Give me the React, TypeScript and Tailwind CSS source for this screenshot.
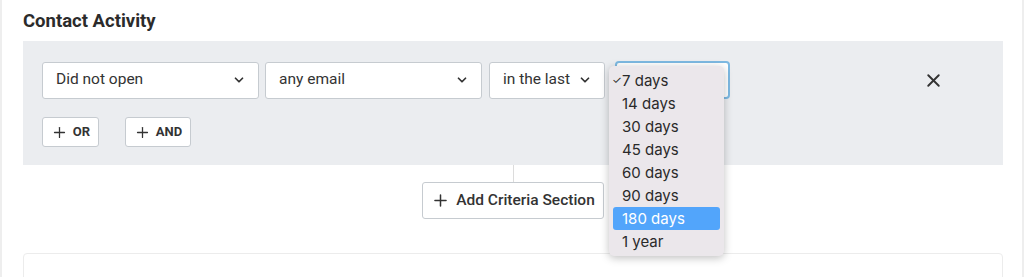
import { ChevronDown, Plus, X } from "lucide-react";

const periods = ["7 days", "14 days", "30 days", "45 days", "60 days", "90 days", "180 days", "1 year"];

function SelectBox({ label, width }: { label: string; width: string }) {
  return (
    <div
      className={`${width} flex h-[37px] items-center justify-between rounded-[3px] border border-[#c6cbd0] bg-white pl-[13px] pr-[12px] text-[15.5px] text-[#333]`}
    >
      <span>{label}</span>
      <ChevronDown size={14} strokeWidth={3} className="text-[#333]" />
    </div>
  );
}

function SmallButton({ label, width }: { label: string; width: string }) {
  return (
    <button
      type="button"
      className={`${width} flex h-[30px] items-center justify-center gap-[5px] rounded-[3px] border border-[#c6cbd0] bg-white text-[13px] font-bold text-[#333]`}
    >
      <Plus size={17} strokeWidth={1.8} />
      {label}
    </button>
  );
}

export default function App() {
  return (
    <div
      className="h-[277px] w-[1024px] overflow-hidden border-x-2 border-[#eeeeee] bg-white pl-[21px] pr-[19px] pt-[9px]"
      style={{ fontFamily: "Roboto, 'Noto Sans', sans-serif" }}
    >
      <h2 className="text-[18.5px] font-bold leading-[24px] text-[#2b2b2b]">Contact Activity</h2>

      <div className="mt-[8px] w-[980px] bg-[#ebedf0] pb-[18px] pl-[19px] pt-[20px]">
        <div className="flex items-center">
          <SelectBox label="Did not open" width="w-[217px]" />
          <div className="ml-[6px]">
            <SelectBox label="any email" width="w-[217px]" />
          </div>
          <div className="ml-[7px]">
            <SelectBox label="in the last" width="w-[116px]" />
          </div>
          <div className="relative ml-[10px]">
            <div className="h-[38px] w-[115px] rounded-[4px] border-2 border-[#7db9e2] bg-white" />
            <ul
              className="absolute left-[-6px] top-[5px] z-10 w-[115px] rounded-[5px] bg-[#ebe7eb] px-[4px] py-[3px] text-[15px] leading-[23px] text-[#2a2a2a] shadow-[0_2px_8px_rgba(0,0,0,0.25)]"
              style={{ fontFamily: "Inter, 'Noto Sans', sans-serif" }}
            >
              {periods.map((p, i) => (
                <li
                  key={p}
                  className={`relative rounded-[3px] pl-[9px] ${i === 6 ? "bg-[#52a5fb] text-white" : ""}`}
                >
                  {i === 0 && <span className="absolute left-[-1px] top-0 text-[11px]">✓</span>}
                  {p}
                </li>
              ))}
            </ul>
          </div>
          <div className="flex-1" />
          <button type="button" className="mr-[59px] text-[#333]">
            <X size={21} strokeWidth={2.2} />
          </button>
        </div>

        <div className="mt-[18px] flex gap-[26px]">
          <SmallButton label="OR" width="w-[57px]" />
          <SmallButton label="AND" width="w-[66px]" />
        </div>
      </div>

      <div className="flex w-[980px] flex-col items-center">
        <div className="h-[17px] w-px bg-[#dcdcdc]" />
        <button
          type="button"
          className="flex h-[37px] w-[182px] items-center justify-center gap-[6px] rounded-[3px] border border-[#c6cbd0] bg-white text-[15.5px] font-medium text-[#333]"
        >
          <Plus size={19} strokeWidth={1.9} />
          Add Criteria Section
        </button>
      </div>

      <div className="mt-[34px] h-[40px] w-[980px] rounded-t-[4px] border border-[#ececec] bg-white" />
    </div>
  );
}
